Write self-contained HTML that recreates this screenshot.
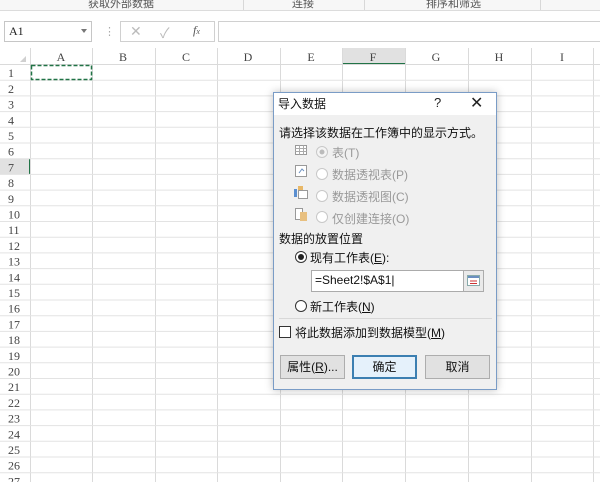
<!DOCTYPE html>
<html><head><meta charset="utf-8"><style>
*{box-sizing:border-box;margin:0;padding:0}
body{width:600px;height:482px;overflow:hidden;background:#fff;position:relative;font-family:"Liberation Sans","Noto Sans CJK SC",sans-serif;}
.abs{position:absolute}
.cj{font-family:"Liberation Sans","Noto Sans CJK SC",sans-serif}
.mono{font-family:"Liberation Serif","Noto Serif CJK SC",serif;color:#444;font-size:12px}
</style></head><body>
<!-- ribbon -->
<div class="abs" style="left:0;top:0;width:600px;height:11px;background:#f7f7f7;border-bottom:1px solid #dcdcdc"></div>
<div class="abs cj" style="left:88px;top:-5px;font-size:11px;color:#555">获取外部数据</div>
<div class="abs cj" style="left:292px;top:-5px;font-size:11px;color:#555">连接</div>
<div class="abs cj" style="left:426px;top:-5px;font-size:11px;color:#555">排序和筛选</div>
<div class="abs" style="left:243px;top:0;width:1px;height:10px;background:#d8d8d8"></div>
<div class="abs" style="left:364px;top:0;width:1px;height:10px;background:#d8d8d8"></div>
<div class="abs" style="left:540px;top:0;width:1px;height:10px;background:#d8d8d8"></div>
<div class="abs" style="left:0;top:11px;width:600px;height:37px;background:#fff"></div>
<!-- formula bar -->
<div class="abs" style="left:4px;top:21px;width:88px;height:21px;border:1px solid #c6c6c6;background:#fff"></div>
<div class="abs mono" style="left:9px;top:24px;font-size:12px;color:#222">A1</div>
<div class="abs" style="left:81px;top:29px;width:0;height:0;border-left:3px solid transparent;border-right:3px solid transparent;border-top:4px solid #777"></div>
<div class="abs" style="left:104px;top:25px;color:#aaa;font-size:11px">⋮</div>
<div class="abs" style="left:120px;top:21px;width:95px;height:21px;border:1px solid #d0d0d0;background:#fff"></div>
<div class="abs" style="left:130px;top:23px;color:#bbb;font-size:14px">✕</div>
<div class="abs" style="left:160px;top:23px;color:#bbb;font-size:14px">✓</div>
<div class="abs" style="left:193px;top:23px;color:#555;font-size:12px;font-style:italic;font-family:'Liberation Serif',serif">f<span style="font-size:8px">x</span></div>
<div class="abs" style="left:218px;top:21px;width:390px;height:21px;border:1px solid #d0d0d0;background:#fff"></div>
<!-- grid -->
<svg class="abs" style="left:0;top:48px" width="600" height="434">
<rect x="0" y="0" width="600" height="16.5" fill="#fff"/>
<rect x="342" y="0" width="63" height="16" fill="#e1e1e1"/>
<rect x="342" y="15" width="63" height="2" fill="#217346"/>
<rect x="0" y="110.7" width="30" height="15.7" fill="#e1e1e1"/>
<rect x="29" y="110.7" width="2" height="15.7" fill="#217346"/>
<g stroke="#dadada" stroke-width="1">
<line x1="0" y1="16.5" x2="600" y2="16.5"/>
<line x1="30.5" y1="0" x2="30.5" y2="434"/>
<line x1="92.5" y1="0" x2="92.5" y2="434"/><line x1="155.5" y1="0" x2="155.5" y2="434"/><line x1="217.5" y1="0" x2="217.5" y2="434"/><line x1="280.5" y1="0" x2="280.5" y2="434"/><line x1="342.5" y1="0" x2="342.5" y2="434"/><line x1="405.5" y1="0" x2="405.5" y2="434"/><line x1="468.5" y1="0" x2="468.5" y2="434"/><line x1="531.5" y1="0" x2="531.5" y2="434"/><line x1="593.5" y1="0" x2="593.5" y2="434"/>
</g>
<g stroke="#e3e3e3" stroke-width="1" id="rows"></g>
<polygon points="20,14 26,8 26,14" fill="#d0d0d0"/>
<g font-family="Liberation Serif, serif" font-size="12" fill="#444" text-anchor="middle">
<text x="61" y="13">A</text><text x="123" y="13">B</text><text x="186" y="13">C</text><text x="248" y="13">D</text><text x="311" y="13">E</text><text x="373" y="13">F</text><text x="436" y="13">G</text><text x="499" y="13">H</text><text x="562" y="13">I</text>
</g>
<g id="nums" font-family="Liberation Serif, serif" font-size="12" fill="#444"></g>
<rect x="31.5" y="17.5" width="60" height="14" fill="none" stroke="#217346" stroke-width="1.5" stroke-dasharray="4,2"/>
</svg>
<script>
var r=document.getElementById('rows'),n=document.getElementById('nums'),s='',t='';
for(var i=1;i<=28;i++){var y=16.5+i*15.7;s+='<line x1="0" y1="'+y.toFixed(1)+'" x2="600" y2="'+y.toFixed(1)+'"/>';t+='<text x="8" y="'+(y-3).toFixed(1)+'">'+i+'</text>';}
r.innerHTML=s;n.innerHTML=t;
</script>
<!-- dialog -->
<div class="abs" style="left:273px;top:92px;width:224px;height:298px;background:#f0f0f0;border:1px solid #7a9cc6;box-shadow:0 0 8px rgba(0,0,0,.25)"></div>
<div class="abs" style="left:274px;top:93px;width:222px;height:22px;background:#fff"></div>
<div class="abs cj" style="left:278px;top:95px;font-size:12px;color:#111">导入数据</div>
<div class="abs" style="left:434px;top:95px;font-size:13px;color:#222">?</div>
<div class="abs" style="left:470px;top:93px;font-size:16px;color:#222">✕</div>
<div class="abs cj" style="left:279px;top:124px;font-size:12px;color:#111">请选择该数据在工作簿中的显示方式。</div>
<!-- icons -->
<svg class="abs" style="left:294px;top:144px" width="20" height="80">
<rect x="1.5" y="1.5" width="11" height="9" fill="#fff" stroke="#999"/><path d="M1.5 4.5h11M1.5 7.5h11M5.5 1.5v9M9.5 1.5v9" stroke="#aaa"/>
<rect x="1.5" y="21.5" width="11" height="11" fill="#fff" stroke="#999"/><path d="M5 29l3-4 2 2" stroke="#6a8fbf" fill="none"/>
<rect x="0" y="45" width="3" height="8" fill="#5b8fd0"/><rect x="4" y="42" width="5" height="4" fill="#e8b868"/><rect x="4.5" y="46.5" width="9" height="8" fill="#fff" stroke="#999"/>
<rect x="1.5" y="64.5" width="7" height="11" fill="#fff" stroke="#999"/><rect x="6" y="68" width="7" height="9" fill="#e8c080"/>
</svg>
<svg class="abs" style="left:314px;top:144px" width="16" height="80">
<circle cx="8" cy="8" r="5.5" fill="#f4f4f4" stroke="#c8c8c8"/><circle cx="8" cy="8" r="2.5" fill="#bbb"/>
<circle cx="8" cy="30" r="5.5" fill="#fff" stroke="#c8c8c8"/>
<circle cx="8" cy="52" r="5.5" fill="#fff" stroke="#c8c8c8"/>
<circle cx="8" cy="73" r="5.5" fill="#fff" stroke="#c8c8c8"/>
</svg>
<div class="abs cj" style="left:332px;top:142px;font-size:12px;color:#999;line-height:22px">表(T)<br>数据透视表(P)<br>数据透视图(C)<br>仅创建连接(O)</div>
<div class="abs cj" style="left:279px;top:230px;font-size:12px;color:#111">数据的放置位置</div>
<svg class="abs" style="left:294px;top:250px" width="14" height="64">
<circle cx="7" cy="7" r="5.5" fill="#fff" stroke="#333"/><circle cx="7" cy="7" r="3" fill="#222"/>
<circle cx="7" cy="56" r="5.5" fill="#fff" stroke="#333"/>
</svg>
<div class="abs cj" style="left:310px;top:249px;font-size:12px;color:#111">现有工作表(<u>E</u>):</div>
<div class="abs" style="left:311px;top:270px;width:153px;height:22px;background:#fff;border:1px solid #ababab"></div>
<div class="abs" style="left:315px;top:273px;font-size:12px;color:#111">=Sheet2!$A$1<span style="font-weight:normal">|</span></div>
<div class="abs" style="left:463px;top:270px;width:21px;height:22px;background:#eaeaea;border:1px solid #ababab"></div>
<svg class="abs" style="left:466px;top:274px" width="15" height="14"><rect x="1.5" y="1.5" width="12" height="10" fill="#fff" stroke="#8aa"/><rect x="2" y="2" width="11" height="2" fill="#6a8fc0"/><path d="M4 7h7M4 9.5h7" stroke="#c33"/></svg>
<div class="abs cj" style="left:310px;top:298px;font-size:12px;color:#111">新工作表(<u>N</u>)</div>
<div class="abs" style="left:279px;top:318px;width:213px;height:1px;background:#d8d8d8"></div>
<div class="abs" style="left:279px;top:326px;width:12px;height:12px;background:#fff;border:1px solid #333"></div>
<div class="abs cj" style="left:295px;top:324px;font-size:12px;color:#111">将此数据添加到数据模型(<u>M</u>)</div>
<div class="abs cj" style="left:280px;top:355px;width:65px;height:24px;background:#e1e1e1;border:1px solid #adadad;font-size:12px;text-align:center;line-height:22px;color:#111">属性(<u>R</u>)...</div>
<div class="abs cj" style="left:352px;top:355px;width:65px;height:24px;background:#e5f1fb;border:2px solid #3c7fb1;font-size:12px;text-align:center;line-height:20px;color:#111">确定</div>
<div class="abs cj" style="left:425px;top:355px;width:65px;height:24px;background:#e1e1e1;border:1px solid #adadad;font-size:12px;text-align:center;line-height:22px;color:#111">取消</div>
</body></html>
